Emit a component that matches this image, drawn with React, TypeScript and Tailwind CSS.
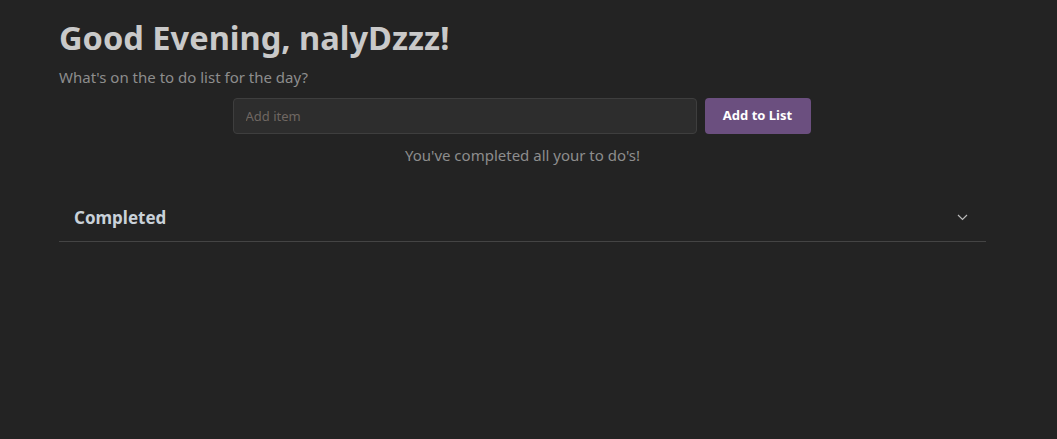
import React from "react";

export default function App() {
  return (
    <div
      className="min-h-[439px] w-full bg-[#232323]"
      style={{ fontFamily: '"Segoe UI", "Noto Sans", "Open Sans", sans-serif' }}
    >
      <div className="ml-[59px] w-[927px] pt-[16px]">
        <h1 className="text-[32.6px] font-bold leading-[44px] text-[#c9c9c9]">
          Good Evening, nalyDzzz!
        </h1>
        <p className="mt-[7px] text-[15px] leading-[20px] text-[#8d8d8d]">
          What's on the to do list for the day?
        </p>
        <div className="mt-[11px] mr-[2px] flex justify-center gap-[8px]">
          <input
            className="h-[36px] w-[464px] rounded-[4px] border border-[#3e3e3e] bg-[#2d2d2d] px-[12px] text-[13px] text-[#c9c9c9] placeholder:text-[#6f6762] outline-none"
            placeholder="Add item"
          />
          <button className="h-[36px] w-[106px] rounded-[4px] bg-[#6b4f7f] text-[13px] font-bold text-white">
            Add to List
          </button>
        </div>
        <p className="mt-[11px] text-center text-[15px] leading-[20px] text-[#8d8d8d]">
          You've completed all your to do's!
        </p>
        <div className="mt-[29px] flex h-[48px] items-center justify-between border-b border-[#444444] pl-[15px] pr-[18px]">
          <span className="text-[17px] font-bold text-[#c9d1d9]">Completed</span>
          <svg width="11" height="7" viewBox="0 0 11 7" fill="none">
            <path d="M1 1l4.5 4.5L10 1" stroke="#bbbbbb" strokeWidth="1.2" />
          </svg>
        </div>
      </div>
    </div>
  );
}
